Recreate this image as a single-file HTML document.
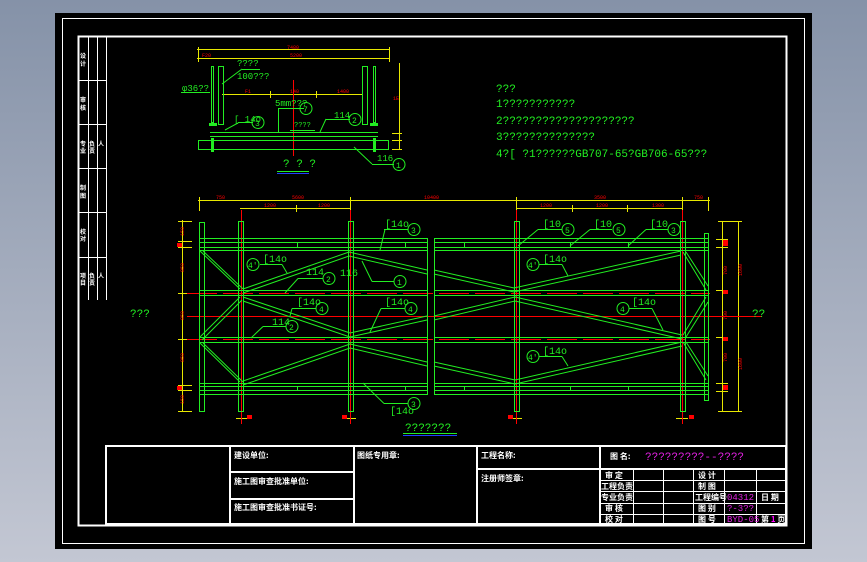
<!DOCTYPE html>
<html><head><meta charset="utf-8"><style>
html,body{margin:0;padding:0;width:867px;height:562px;overflow:hidden;background:linear-gradient(#8592a8,#c3c7d3);}
svg{display:block}
</style></head><body>
<svg width="867" height="562" viewBox="0 0 867 562" xmlns="http://www.w3.org/2000/svg" font-family="Liberation Mono, monospace">
<rect x="55" y="13" width="757" height="536" fill="#000"/>
<rect x="62.5" y="18.5" width="742" height="525" fill="none" stroke="#fff" stroke-width="1"/>
<!-- inner frame -->
<rect x="78.5" y="36.5" width="708" height="489" fill="none" stroke="#fff" stroke-width="2"/>
<g stroke="#fff" stroke-width="1">
<line x1="88.5" y1="37" x2="88.5" y2="300"/><line x1="97.5" y1="37" x2="97.5" y2="300"/><line x1="106.5" y1="37" x2="106.5" y2="300"/>
<line x1="79" y1="80.5" x2="106" y2="80.5"/><line x1="79" y1="124.5" x2="106" y2="124.5"/><line x1="79" y1="168.5" x2="106" y2="168.5"/><line x1="79" y1="212.5" x2="106" y2="212.5"/><line x1="79" y1="257.5" x2="106" y2="257.5"/>
</g>
<g fill="#fff" font-family="Noto Sans CJK SC, sans-serif" font-size="6" font-weight="bold">
<text x="80" y="58">设</text><text x="80" y="66">计</text>
<text x="80" y="102">审</text><text x="80" y="110">核</text>
<text x="80" y="146">专</text><text x="80" y="153">业</text><text x="89" y="146">负</text><text x="89" y="153">责</text><text x="98" y="146">人</text>
<text x="80" y="190">制</text><text x="80" y="198">图</text>
<text x="80" y="234">校</text><text x="80" y="241">对</text>
<text x="80" y="278">项</text><text x="80" y="285">目</text><text x="89" y="278">负</text><text x="89" y="285">责</text><text x="98" y="278">人</text>
</g>
<!-- title block -->
<g stroke="#fff" stroke-width="2" fill="none">
<rect x="106" y="446" width="680" height="78"/>
<line x1="230" y1="446" x2="230" y2="524"/><line x1="354" y1="446" x2="354" y2="524"/><line x1="477" y1="446" x2="477" y2="524"/><line x1="600" y1="446" x2="600" y2="524"/>
<line x1="230" y1="472" x2="354" y2="472"/><line x1="230" y1="499" x2="354" y2="499"/>
<line x1="477" y1="469" x2="786" y2="469"/>
</g>
<g stroke="#fff" stroke-width="1">
<line x1="600" y1="480.5" x2="786" y2="480.5"/><line x1="600" y1="491.5" x2="786" y2="491.5"/><line x1="600" y1="503.5" x2="786" y2="503.5"/><line x1="600" y1="514.5" x2="786" y2="514.5"/>
<line x1="633.5" y1="469" x2="633.5" y2="524"/><line x1="663.5" y1="469" x2="663.5" y2="524"/><line x1="693.5" y1="469" x2="693.5" y2="524"/><line x1="724.5" y1="469" x2="724.5" y2="524"/><line x1="756.5" y1="469" x2="756.5" y2="524"/>
</g>
<g fill="#fff" font-family="Noto Sans CJK SC, sans-serif" font-size="8" font-weight="bold">
<text x="234" y="458">建设单位:</text><text x="234" y="484">施工图审查批准单位:</text><text x="234" y="510">施工图审查批准书证号:</text>
<text x="357" y="458">图纸专用章:</text><text x="481" y="458">工程名称:</text><text x="481" y="481">注册师签章:</text>
<text x="610" y="459">图 名:</text>
<text x="605" y="478">审 定</text><text x="601" y="489">工程负责</text><text x="601" y="500">专业负责</text><text x="605" y="511">审 核</text><text x="605" y="522">校 对</text>
<text x="698" y="478">设 计</text><text x="698" y="489">制 图</text><text x="695" y="500">工程编号</text><text x="698" y="511">图 别</text><text x="698" y="522">图 号</text>
<text x="761" y="500">日 期</text><text x="761" y="522">第 <tspan fill="#f0f">1</tspan> 页</text>
</g>
<g fill="#e020e0" font-size="9">
<text x="645" y="460" font-size="11">?????????--????</text>
<text x="727" y="500">04312</text><text x="727" y="511">?-3??</text><text x="727" y="522">BYD-05</text>
</g>
<!-- ===== top detail ===== -->
<g stroke="#e8e800" stroke-width="1" fill="none">
<line x1="197" y1="49.5" x2="390" y2="49.5"/><line x1="197" y1="58.5" x2="390" y2="58.5"/>
<line x1="198.5" y1="47" x2="198.5" y2="62"/><line x1="389.5" y1="47" x2="389.5" y2="62"/>
<line x1="222" y1="94.5" x2="363" y2="94.5"/><line x1="223.5" y1="91" x2="223.5" y2="98"/><line x1="270.5" y1="91" x2="270.5" y2="98"/><line x1="316.5" y1="91" x2="316.5" y2="98"/><line x1="362.5" y1="91" x2="362.5" y2="98"/>
<line x1="399.5" y1="63" x2="399.5" y2="150"/><line x1="392" y1="133.5" x2="402" y2="133.5"/><line x1="392" y1="140.5" x2="402" y2="140.5"/><line x1="392" y1="149.5" x2="402" y2="149.5"/>
</g>
<g fill="#f00" font-size="5"><text x="287" y="49">7480</text><text x="202" y="57">F20</text><text x="290" y="57">5200</text><text x="245" y="93">F1</text><text x="290" y="93">140</text><text x="337" y="93">1400</text><text x="393" y="100">1E</text></g>
<line x1="293.5" y1="80" x2="293.5" y2="156" stroke="#f00"/>
<g stroke="#22ee22" stroke-width="1" fill="none">
<rect x="211.5" y="66.5" width="2" height="56"/><rect x="218.5" y="66.5" width="5" height="58"/>
<rect x="362.5" y="66.5" width="5" height="58"/><rect x="373.5" y="66.5" width="2" height="56"/>
<rect x="198.5" y="140.5" width="190" height="9"/>
<line x1="210" y1="132.5" x2="378" y2="132.5"/><line x1="210" y1="136.5" x2="378" y2="136.5"/>
<line x1="278.5" y1="108" x2="278.5" y2="132"/><line x1="278" y1="108.5" x2="304" y2="108.5"/>
<line x1="181" y1="92.5" x2="210" y2="92.5"/>
<line x1="222" y1="84" x2="242" y2="69"/><line x1="242" y1="69.5" x2="260" y2="69.5"/>
<line x1="225" y1="130" x2="238" y2="123"/><line x1="238" y1="122.5" x2="253" y2="122.5"/>
<line x1="320" y1="132" x2="326" y2="119"/><line x1="326" y1="119.5" x2="350" y2="119.5"/>
<line x1="354" y1="147" x2="372" y2="164"/><line x1="372" y1="164.5" x2="394" y2="164.5"/>
<line x1="290" y1="130.5" x2="315" y2="130.5"/>
<circle cx="306" cy="108.5" r="6"/><circle cx="258" cy="122.5" r="6"/><circle cx="355" cy="119.5" r="6"/><circle cx="399" cy="164.5" r="6"/>
</g>
<g fill="#22ee22" stroke="none"><rect x="209" y="123" width="8" height="3"/><rect x="370" y="123" width="8" height="3"/><rect x="211" y="138" width="3" height="14"/><rect x="373" y="138" width="3" height="14"/></g>
<g fill="#22ee22" font-size="9">
<text x="237" y="66">????</text><text x="237" y="79">100???</text><text x="182" y="91">φ36??</text>
<text x="275" y="106">5mm???</text><text x="234" y="122">[ 14o</text><text x="334" y="118">114</text><text x="294" y="127" font-size="7">????</text>
<text x="377" y="161">116</text><text x="283" y="167" font-size="11">? ? ?</text>
<text x="303" y="112" font-size="8">7</text><text x="255" y="126" font-size="8">3</text><text x="352" y="123" font-size="8">2</text><text x="396" y="168" font-size="8">1</text>
</g>
<line x1="277" y1="171.5" x2="309" y2="171.5" stroke="#22ee22"/><line x1="277" y1="173.5" x2="309" y2="173.5" stroke="#2040ff"/>
<!-- notes -->
<g fill="#22ee22" font-size="11">
<text x="496" y="92">???</text><text x="496" y="107">1???????????</text><text x="496" y="124">2????????????????????</text><text x="496" y="140">3??????????????</text><text x="496" y="157">4?[ ?1??????GB707-65?GB706-65???</text>
</g>
<!-- ===== main drawing ===== -->
<g stroke="#e8e800" stroke-width="1" fill="none">
<line x1="198" y1="200.5" x2="710" y2="200.5"/><line x1="199.5" y1="197" x2="199.5" y2="211"/><line x1="350.5" y1="197" x2="350.5" y2="211"/><line x1="516.5" y1="197" x2="516.5" y2="211"/><line x1="682.5" y1="197" x2="682.5" y2="211"/><line x1="708.5" y1="197" x2="708.5" y2="211"/>
<line x1="240" y1="208.5" x2="351" y2="208.5"/><line x1="296.5" y1="205" x2="296.5" y2="212"/>
<line x1="516" y1="208.5" x2="683" y2="208.5"/><line x1="572.5" y1="205" x2="572.5" y2="212"/><line x1="627.5" y1="205" x2="627.5" y2="212"/>
<line x1="182.5" y1="220" x2="182.5" y2="412"/>
<line x1="178" y1="221.5" x2="192" y2="221.5"/><line x1="178" y1="241.5" x2="192" y2="241.5"/><line x1="178" y1="247.5" x2="192" y2="247.5"/><line x1="178" y1="293.5" x2="192" y2="293.5"/><line x1="178" y1="339.5" x2="192" y2="339.5"/><line x1="178" y1="385.5" x2="192" y2="385.5"/><line x1="178" y1="390.5" x2="192" y2="390.5"/><line x1="178" y1="411.5" x2="192" y2="411.5"/>
<line x1="738.5" y1="221" x2="738.5" y2="412"/><line x1="722.5" y1="221" x2="722.5" y2="412"/>
<line x1="718" y1="221.5" x2="742" y2="221.5"/><line x1="718" y1="316.5" x2="742" y2="316.5"/><line x1="718" y1="411.5" x2="742" y2="411.5"/>
<line x1="716" y1="239.5" x2="728" y2="239.5"/><line x1="716" y1="247.5" x2="728" y2="247.5"/><line x1="716" y1="290.5" x2="728" y2="290.5"/><line x1="716" y1="337.5" x2="728" y2="337.5"/><line x1="716" y1="383.5" x2="728" y2="383.5"/><line x1="716" y1="391.5" x2="728" y2="391.5"/>
<line x1="236" y1="418.5" x2="248" y2="418.5"/><line x1="344" y1="418.5" x2="356" y2="418.5"/><line x1="510" y1="418.5" x2="522" y2="418.5"/><line x1="676" y1="418.5" x2="688" y2="418.5"/>
</g>
<g fill="#f00" font-size="5">
<text x="216" y="199">750</text><text x="292" y="199">5600</text><text x="424" y="199">10400</text><text x="594" y="199">3500</text><text x="694" y="199">750</text>
<text x="264" y="207">1200</text><text x="318" y="207">1200</text><text x="540" y="207">1200</text><text x="596" y="207">1200</text><text x="652" y="207">1300</text>
<rect x="177" y="243" width="5" height="4"/><rect x="177" y="386" width="5" height="4"/><rect x="247" y="415" width="5" height="4"/><rect x="342" y="415" width="5" height="4"/><rect x="508" y="415" width="5" height="4"/><rect x="689" y="415" width="5" height="4"/>
<rect x="723" y="240" width="5" height="6"/><rect x="723" y="290" width="5" height="4"/><rect x="723" y="337" width="5" height="4"/><rect x="723" y="385" width="5" height="5"/>
</g>
<g fill="#f00" font-size="5" transform="rotate(-90)">
<text x="-236" y="184">150</text><text x="-272" y="184">850</text><text x="-320" y="184">850</text><text x="-362" y="184">850</text><text x="-404" y="184">150</text>
<text x="-276" y="742">1600</text><text x="-370" y="742">1600</text><text x="-275" y="727">700</text><text x="-320" y="727">700</text><text x="-362" y="727">700</text>
</g>
<!-- red centre lines -->
<g stroke="#f00" stroke-width="1">
<line x1="187" y1="316.5" x2="762" y2="316.5"/>
<line x1="241.5" y1="210" x2="241.5" y2="424"/><line x1="350.5" y1="210" x2="350.5" y2="424"/><line x1="516.5" y1="210" x2="516.5" y2="424"/><line x1="682.5" y1="210" x2="682.5" y2="424"/>
<line x1="187" y1="293.5" x2="710" y2="293.5" stroke-dasharray="30 6"/><line x1="187" y1="339.5" x2="710" y2="339.5" stroke-dasharray="30 6"/>
</g>
<g stroke="#22ee22" stroke-width="1" fill="none">
<!-- posts -->
<rect x="199.5" y="222.5" width="5" height="189"/>
<rect x="238.5" y="221.5" width="5" height="190"/><rect x="348.5" y="221.5" width="5" height="190"/>
<rect x="514.5" y="221.5" width="5" height="190"/><rect x="680.5" y="221.5" width="5" height="190"/>
<rect x="704.5" y="233.5" width="4" height="167"/>
<!-- rails -->
<line x1="199" y1="238.5" x2="428" y2="238.5"/><line x1="199" y1="242.5" x2="428" y2="242.5"/><line x1="199" y1="247.5" x2="428" y2="247.5"/><line x1="199" y1="250.5" x2="428" y2="250.5"/>
<line x1="199" y1="290.5" x2="428" y2="290.5"/><line x1="199" y1="295.5" x2="428" y2="295.5"/>
<line x1="199" y1="337.5" x2="428" y2="337.5"/><line x1="199" y1="342.5" x2="428" y2="342.5"/>
<line x1="199" y1="383.5" x2="428" y2="383.5"/><line x1="199" y1="386.5" x2="428" y2="386.5"/><line x1="199" y1="390.5" x2="428" y2="390.5"/><line x1="199" y1="394.5" x2="428" y2="394.5"/>
<line x1="434" y1="238.5" x2="708" y2="238.5"/><line x1="434" y1="242.5" x2="708" y2="242.5"/><line x1="434" y1="247.5" x2="708" y2="247.5"/><line x1="434" y1="250.5" x2="708" y2="250.5"/>
<line x1="434" y1="290.5" x2="708" y2="290.5"/><line x1="434" y1="295.5" x2="708" y2="295.5"/>
<line x1="434" y1="337.5" x2="708" y2="337.5"/><line x1="434" y1="342.5" x2="708" y2="342.5"/>
<line x1="434" y1="383.5" x2="708" y2="383.5"/><line x1="434" y1="386.5" x2="708" y2="386.5"/><line x1="434" y1="390.5" x2="708" y2="390.5"/><line x1="434" y1="394.5" x2="708" y2="394.5"/>
<line x1="427.5" y1="238" x2="427.5" y2="395"/><line x1="434.5" y1="238" x2="434.5" y2="395"/>
<line x1="297.5" y1="242" x2="297.5" y2="247"/><line x1="405.5" y1="242" x2="405.5" y2="247"/><line x1="297.5" y1="386" x2="297.5" y2="390"/><line x1="405.5" y1="386" x2="405.5" y2="390"/>
<line x1="464.5" y1="242" x2="464.5" y2="247"/><line x1="570.5" y1="242" x2="570.5" y2="247"/><line x1="628.5" y1="242" x2="628.5" y2="247"/><line x1="570.5" y1="386" x2="570.5" y2="390"/><line x1="628.5" y1="386" x2="628.5" y2="390"/><line x1="464.5" y1="386" x2="464.5" y2="390"/>
</g>
<!-- diagonals (double) -->
<g stroke="#22ee22" stroke-width="1" fill="none">
<path d="M200 251L240 289M203 251L243 289"/>
<path d="M200 337L240 297M202 340L242 300"/>
<path d="M200 343L240 382M203 343L243 382"/>
<path d="M243 289L349 252L427 270M243 293L349 256L427 274"/>
<path d="M434 270L514 288L681 251M434 274L514 292L681 255"/>
<path d="M683 252L706 290M686 252L708 286"/>
<path d="M243 297L350 333L427 316M243 301L350 337L427 320"/>
<path d="M434 316L515 297L682 335M434 320L515 301L682 339"/>
<path d="M683 335L706 297M686 337L708 302"/>
<path d="M243 381L350 344L427 362M243 385L350 348L427 366"/>
<path d="M434 362L515 380L682 342M434 366L515 384L682 346"/>
<path d="M683 342L706 380M686 342L708 376"/>
</g>
<!-- leaders & balloons -->
<g stroke="#22ee22" stroke-width="1" fill="none">
<line x1="380" y1="250" x2="385" y2="229.5"/><line x1="384" y1="229.5" x2="408" y2="229.5"/><circle cx="414" cy="229.5" r="6"/>
<line x1="362" y1="261" x2="372" y2="281.5"/><line x1="372" y1="281.5" x2="394" y2="281.5"/><circle cx="400" cy="281.5" r="6"/>
<line x1="285" y1="293" x2="298" y2="278.5"/><line x1="298" y1="278.5" x2="323" y2="278.5"/><circle cx="329" cy="278.5" r="6"/>
<line x1="260" y1="264.5" x2="282" y2="264.5"/><line x1="282" y1="264.5" x2="287" y2="273"/><circle cx="253" cy="264.5" r="6"/>
<line x1="292" y1="308.5" x2="316" y2="308.5"/><line x1="292" y1="308.5" x2="290" y2="316"/><circle cx="322" cy="308.5" r="6"/>
<line x1="251" y1="338" x2="263" y2="326.5"/><line x1="263" y1="326.5" x2="286" y2="326.5"/><circle cx="292" cy="326.5" r="6"/>
<line x1="370" y1="332" x2="381" y2="308.5"/><line x1="381" y1="308.5" x2="405" y2="308.5"/><circle cx="411" cy="308.5" r="6"/>
<line x1="363" y1="383" x2="384" y2="403.5"/><line x1="384" y1="403.5" x2="408" y2="403.5"/><circle cx="414" cy="403.5" r="6"/>
<line x1="518" y1="246" x2="538" y2="229.5"/><line x1="538" y1="229.5" x2="562" y2="229.5"/><circle cx="568" cy="229.5" r="6"/>
<line x1="570" y1="246" x2="590" y2="229.5"/><line x1="590" y1="229.5" x2="612" y2="229.5"/><circle cx="619" cy="229.5" r="6"/>
<line x1="628" y1="246" x2="646" y2="229.5"/><line x1="646" y1="229.5" x2="668" y2="229.5"/><circle cx="674" cy="229.5" r="6"/>
<line x1="539" y1="264.5" x2="562" y2="264.5"/><line x1="562" y1="264.5" x2="568" y2="276"/><circle cx="533" cy="264.5" r="6"/>
<line x1="629" y1="308.5" x2="652" y2="308.5"/><line x1="652" y1="308.5" x2="663" y2="330"/><circle cx="623" cy="308.5" r="6"/>
<line x1="539" y1="356.5" x2="562" y2="356.5"/><line x1="562" y1="356.5" x2="568" y2="366"/><circle cx="533" cy="356.5" r="6"/>
</g>
<g fill="#22ee22" font-size="10">
<text x="385" y="227">[14o</text><text x="340" y="276">116</text><text x="306" y="275">114</text><text x="263" y="262">[14o</text>
<text x="297" y="305">[14o</text><text x="272" y="325">114</text><text x="385" y="305">[14o</text><text x="390" y="414">[14o</text>
<text x="543" y="227">[10</text><text x="594" y="227">[10</text><text x="650" y="227">[10</text>
<text x="543" y="262">[14o</text><text x="632" y="305">[14o</text><text x="543" y="354">[14o</text>
<g font-size="8">
<text x="411" y="233">3</text><text x="397" y="285">1</text><text x="326" y="282">2</text><text x="248" y="268">4'</text><text x="319" y="312">4</text><text x="289" y="330">2</text><text x="408" y="312">4</text><text x="411" y="407">3</text>
<text x="565" y="233">5</text><text x="616" y="233">5</text><text x="671" y="233">3</text><text x="528" y="268">4'</text><text x="620" y="312">4</text><text x="528" y="360">4'</text>
</g>
<text x="130" y="317" font-size="11">???</text><text x="752" y="317" font-size="11">??</text>
<text x="405" y="431" font-size="11">???????</text>
</g>
<line x1="403" y1="433.5" x2="457" y2="433.5" stroke="#22ee22"/><line x1="403" y1="435.5" x2="457" y2="435.5" stroke="#2040ff"/>
</svg>
</body></html>
